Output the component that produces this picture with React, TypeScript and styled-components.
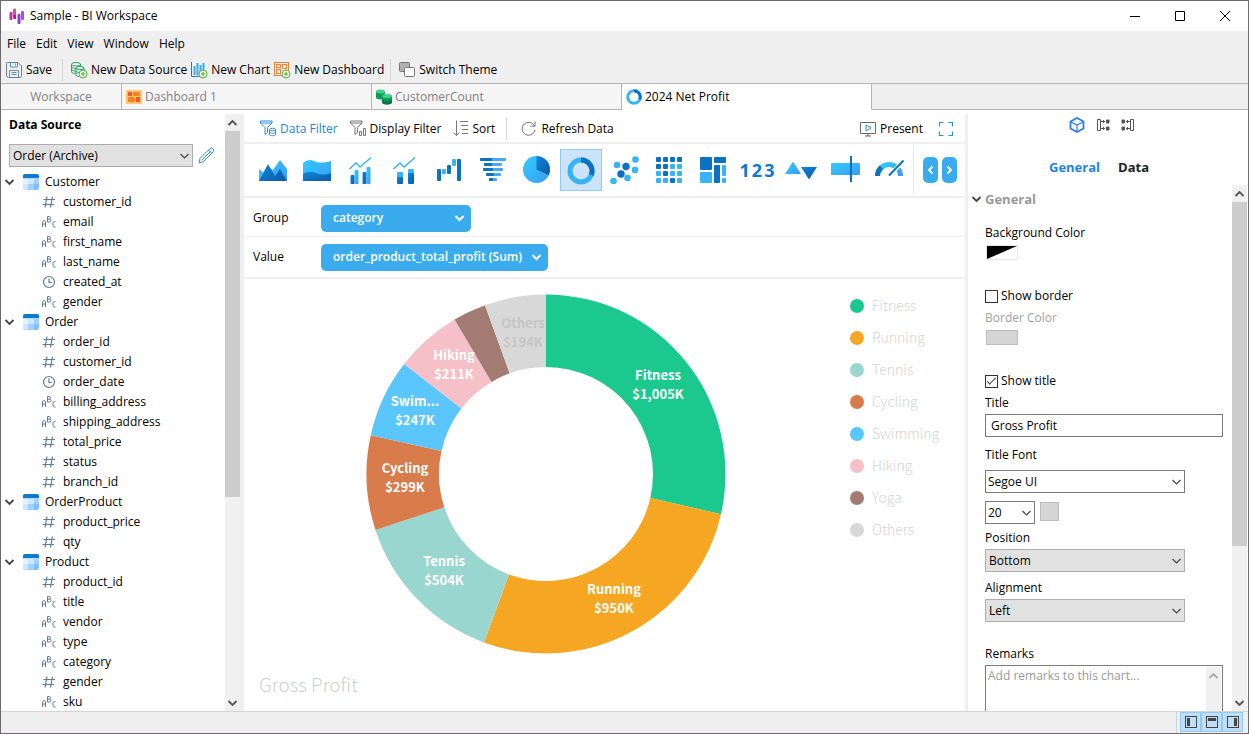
import React from "react";
import styled, { createGlobalStyle, css } from "styled-components";

const UI = `"Open Sans", "Noto Sans", sans-serif`;
const CHART = `"Noto Sans CJK SC", "Noto Sans", sans-serif`;

const Global = createGlobalStyle`
  *, *::before, *::after { box-sizing: border-box; }
  body { margin: 0; background: #fff; color: #000; font: 12px/16px ${UI}; }
  button, input, select, textarea { font: inherit; color: inherit; margin: 0; }
  h1, h2, h3, ul { margin: 0; padding: 0; font: inherit; list-style: none; }
  svg { display: block; flex: none; overflow: visible; }
`;

const Window = styled.div`
  height: 100vh;
  display: flex;
  flex-direction: column;
  border: 1px solid #6c6a6d;
  overflow: hidden;
`;

const TitleBar = styled.header`
  display: flex;
  align-items: center;
  height: 30px;
  padding: 0 1px 0 8px;
  gap: 5px;
  flex: none;
`;
const AppTitle = styled.h1`
  flex: 1;
`;
const WindowButton = styled.button`
  width: 45px;
  height: 30px;
  padding: 0;
  border: 0;
  background: none;
  display: grid;
  place-items: center;
`;
const WindowButtons = styled.div`
  display: flex;
`;

const TopBars = styled.div`
  background: #efefef;
  flex: none;
`;
const MenuBar = styled.nav`
  display: flex;
  align-items: center;
  height: 26px;
  padding-left: 6px;
  gap: 10px;
`;
const PlainButton = styled.button`
  padding: 0;
  border: 0;
  background: none;
  white-space: nowrap;
`;
const ToolBar = styled.div`
  display: flex;
  align-items: center;
  height: 26px;
  padding-left: 5px;
`;
const ToolButton = styled(PlainButton)<{ $color?: string; $gap?: number }>`
  display: flex;
  align-items: center;
  gap: ${(p) => p.$gap ?? 4}px;
  color: ${(p) => p.$color ?? "#000"};
`;
const ToolGroup = styled.div<{ $gap?: number }>`
  display: flex;
  align-items: center;
  gap: ${(p) => p.$gap ?? 4}px;
`;
const Divider = styled.span<{ $before?: number; $after?: number }>`
  width: 1px;
  height: 22px;
  background: #d4d4d4;
  margin: 0 ${(p) => p.$after ?? 8}px 0 ${(p) => p.$before ?? 10}px;
`;

const TabStrip = styled.div`
  display: flex;
  flex: none;
  height: 27px;
  border-top: 1px solid #b4b4b4;
  background: #efefef;
`;
const DocTab = styled.button<{ $active?: boolean; $center?: boolean }>`
  width: ${(p) => (p.$center ? 121 : 250)}px;
  flex: 0 1 auto;
  display: flex;
  align-items: center;
  justify-content: ${(p) => (p.$center ? "center" : "flex-start")};
  gap: 3px;
  padding: 0 4px;
  border: 0;
  border-right: 1px solid #b4b4b4;
  border-bottom: 1px solid ${(p) => (p.$active ? "#fff" : "#b4b4b4")};
  background: ${(p) => (p.$active ? "#fff" : "#f5f5f5")};
  color: ${(p) => (p.$active ? "#000" : "#808080")};
`;
const TabFill = styled.div`
  flex: 1;
  border-bottom: 1px solid #b4b4b4;
`;

const Body = styled.div`
  flex: 1;
  min-height: 0;
  display: flex;
  padding-top: 4px;
`;

/* Scroll bars */
const Track = styled.div`
  width: 15px;
  flex: none;
  display: flex;
  flex-direction: column;
  background: #f0f0f0;
`;
const ScrollButton = styled.button`
  width: 15px;
  height: 17px;
  flex: none;
  padding: 0;
  border: 0;
  background: none;
  display: grid;
  place-items: center;
`;
const ThumbArea = styled.div`
  flex: 1;
`;
const Thumb = styled.div<{ $share: number }>`
  height: ${(p) => p.$share}%;
  background: #cdcdcd;
`;

/* Data source panel */
const SourcePanel = styled.aside`
  display: flex;
  width: 243px;
  flex: none;
  border-right: 4px solid #efefef;
`;
const SourceContent = styled.div`
  flex: 1;
  min-width: 0;
  overflow: hidden;
`;
const PanelTitle = styled.h2`
  padding: 3px 8px 11px;
  font-weight: 700;
`;
const SourcePicker = styled.div`
  display: flex;
  align-items: center;
  gap: 5px;
  padding: 0 8px;
  margin-bottom: 5px;
`;
const Group = styled.button`
  display: flex;
  align-items: center;
  width: 100%;
  height: 20px;
  padding: 0 0 0 4px;
  border: 0;
  background: none;
`;
const GroupLabel = styled.span`
  margin-left: 6px;
`;
const TableGlyph = styled.span`
  margin-left: 9px;
`;
const Field = styled.li`
  display: flex;
  align-items: center;
  gap: 7px;
  height: 20px;
  padding-left: 41px;
`;

/* Select with its own arrow */
const SelectBox = styled.div<{ $width: number }>`
  position: relative;
  width: ${(p) => p.$width}px;
  svg {
    position: absolute;
    right: 4px;
    top: 9px;
    pointer-events: none;
  }
`;
const Select = styled.select<{ $light?: boolean }>`
  appearance: none;
  display: block;
  width: 100%;
  height: 23px;
  padding: 0 18px 0 ${(p) => (p.$light ? 2 : 3)}px;
  border: 1px solid ${(p) => (p.$light ? "#7a7a7a" : "#adadad")};
  border-radius: 0;
  background: ${(p) => (p.$light ? "#fff" : "#e1e1e1")};
`;

/* Main column */
const Main = styled.main`
  flex: 1;
  min-width: 0;
  display: flex;
  flex-direction: column;
`;
const ChartTools = styled.div`
  display: flex;
  align-items: center;
  height: 30px;
  flex: none;
  padding: 1px 12px 0 16px;
  border-bottom: 2px solid #efefef;
`;
const Spacer = styled.span`
  flex: 1;
`;
const TypeRow = styled.div`
  display: flex;
  align-items: center;
  height: 54px;
  flex: none;
  border-bottom: 2px solid #efefef;
`;
const TypeList = styled.div`
  display: flex;
  align-items: center;
  gap: 2px;
  flex: 1;
  padding-left: 8px;
`;
const TypeButton = styled.button<{ $on?: boolean }>`
  width: 42px;
  height: 42px;
  flex: none;
  padding: ${(p) => (p.$on ? "2px 0 0 0" : 0)};
  display: grid;
  place-items: center;
  border: 1px solid transparent;
  background: none;
  ${(p) =>
    p.$on &&
    css`
      background: #cce4f9;
      border-color: #94c9f0;
    `}
`;
const Pager = styled.div`
  display: flex;
  align-items: center;
  gap: 4px;
  height: 48px;
  padding: 0 8px 0 9px;
  border-left: 1px solid #e9e9e9;
`;
const PagerButton = styled.button`
  width: 15px;
  height: 26px;
  padding: 0;
  border: 0;
  border-radius: 5px;
  background: #3aaced;
  display: grid;
  place-items: center;
`;
const BindRow = styled.div<{ $last?: boolean }>`
  display: flex;
  align-items: center;
  height: ${(p) => (p.$last ? 42 : 39)}px;
  flex: none;
  padding: ${(p) => (p.$last ? 0 : 2)}px 0 0 9px;
  border-bottom: ${(p) => (p.$last ? "2px solid #efefef" : "1px solid #efefef")};
`;
const BindLabel = styled.span`
  width: 68px;
`;
const Pill = styled.button`
  display: flex;
  align-items: center;
  justify-content: space-between;
  gap: 10px;
  min-width: 150px;
  height: 27px;
  padding: 0 7px 0 12px;
  border: 0;
  border-radius: 5px;
  background: #3aaced;
  color: #fff;
  font-weight: 600;
`;
const ChartArea = styled.section`
  flex: 1;
  min-height: 0;
  display: flex;
  flex-direction: column;
  padding: 9px 0 13px;
  font-family: ${CHART};
`;
const ChartBody = styled.div`
  flex: 1;
  min-height: 0;
  display: flex;
`;
const DonutHolder = styled.div`
  flex: 1;
  display: flex;
  justify-content: center;
  padding: 6px 2px 0 0;
`;
const SliceText = styled.text`
  font: 700 13px ${CHART};
  text-anchor: middle;
`;
const Legend = styled.ul`
  width: 115px;
  flex: none;
  padding-top: 2px;
`;
const LegendItem = styled.li`
  display: flex;
  align-items: center;
  gap: 8px;
  height: 32px;
  font-size: 14px;
  font-weight: 300;
  line-height: 20px;
  color: #d4d4d4;
`;
const LegendLabel = styled.span`
  padding-bottom: 2px;
`;
const Dot = styled.span<{ $color: string }>`
  width: 14px;
  height: 14px;
  border-radius: 50%;
  background: ${(p) => p.$color};
`;
const ChartTitle = styled.h2`
  padding-left: 15px;
  font-size: 19px;
  font-weight: 300;
  line-height: 28px;
  color: #d0d0d0;
`;

/* Property panel */
const Props = styled.aside`
  width: 283px;
  flex: none;
  display: flex;
  flex-direction: column;
  border-left: 3px solid #efefef;
`;
const ModeRow = styled.div`
  display: flex;
  align-items: center;
  justify-content: center;
  gap: 11px;
  height: 22px;
  padding-right: 12px;
`;
const PropTabs = styled.div`
  display: flex;
  justify-content: center;
  gap: 18px;
  padding: 21px 18px 8px 0;
`;
const PropTab = styled(PlainButton)<{ $on?: boolean }>`
  font-size: 13px;
  line-height: 20px;
  font-weight: 700;
  color: ${(p) => (p.$on ? "#1a86e0" : "#222")};
`;
const PropScroll = styled.div`
  flex: 1;
  min-height: 0;
  display: flex;
  padding-right: 1px;
`;
const PropContent = styled.div`
  flex: 1;
  min-width: 0;
  overflow: hidden;
  padding-right: 9px;
`;
const Section = styled.button`
  display: flex;
  align-items: center;
  gap: 4px;
  height: 28px;
  padding: 0 0 0 4px;
  border: 0;
  background: none;
  color: #999;
  font-size: 13px;
  font-weight: 700;
`;
const Form = styled.form`
  padding: 12px 0 0 17px;
  display: flex;
  flex-direction: column;
  align-items: flex-start;
`;
const FieldBlock = styled.div<{ $after?: number; $gap?: number }>`
  display: flex;
  flex-direction: column;
  align-items: flex-start;
  gap: ${(p) => p.$gap ?? 3}px;
  width: 100%;
  margin-bottom: ${(p) => p.$after ?? 8}px;
`;
const Label = styled.label<{ $dim?: boolean }>`
  color: ${(p) => (p.$dim ? "#a0a0a0" : "#000")};
`;
const CheckLabel = styled.label`
  display: flex;
  align-items: center;
  gap: 3px;
  margin-bottom: 6px;
`;
const Check = styled.input`
  appearance: none;
  width: 13px;
  height: 13px;
  border: 1px solid #333;
  background: #fff;
  display: grid;
  place-items: center;
  &:checked::before {
    content: "";
    width: 9px;
    height: 4px;
    margin-top: -3px;
    border: solid #333;
    border-width: 0 0 1px 1px;
    transform: rotate(-45deg);
  }
`;
const Swatch = styled.button<{ $square?: boolean }>`
  width: ${(p) => (p.$square ? 19 : 32)}px;
  height: ${(p) => (p.$square ? 19 : 15)}px;
  margin: ${(p) => (p.$square ? "1px 0 0 0" : "0 0 0 1px")};
  padding: 0;
  border: 1px solid #bdbdbd;
  background: #d5d5d5;
`;
const SplitSwatch = styled(Swatch)`
  border-color: #e6e6e6;
  background: #fff;
`;
const TextInput = styled.input`
  width: 100%;
  height: 23px;
  padding: 0 5px;
  border: 1px solid #7a7a7a;
`;
const FontRow = styled.div`
  display: flex;
  gap: 5px;
  margin-bottom: 6px;
`;
const RemarkBox = styled.div`
  width: 100%;
  height: 80px;
  display: flex;
  border: 1px solid #7a7a7a;
  padding: 1px 1px 0 0;
`;
const RemarkInput = styled.textarea`
  flex: 1;
  min-width: 0;
  padding: 1px 2px;
  border: 0;
  outline: 0;
  resize: none;
  overflow: hidden;
  &::placeholder { color: #999; opacity: 1; }
`;

const StatusBar = styled.footer`
  display: flex;
  justify-content: flex-end;
  height: 22px;
  flex: none;
  padding-right: 5px;
  background: #efefef;
  border-top: 1px solid #d4d4d4;
`;
const PaneGroup = styled.div`
  display: flex;
  padding-left: 3px;
  border-left: 1px solid #d4d4d4;
`;
const PaneButton = styled.button`
  width: 21px;
  height: 20px;
  padding: 0;
  display: grid;
  place-items: center;
  border: 1px solid #94c9f0;
  background: #bfdff8;
`;

/* ---------- drawings ---------- */

const Chevron = ({ color = "#444", up = false, width = 1.3 }: { color?: string; up?: boolean; width?: number }) => (
  <svg width="9" height="6" viewBox="0 0 9 6" fill="none" stroke={color} strokeWidth={width}>
    <path d={up ? "M.5 5l4-4 4 4" : "M.5 1l4 4 4-4"} />
  </svg>
);

const Plus = () => (
  <g>
    <circle cx="12" cy="12" r="4" fill="#f4fbef" stroke="#56b13a" />
    <path d="M9.8 12h4.4M12 9.800v4.400" stroke="#56b13a" strokeWidth="1.200" />
  </g>
);

const Logo = () => (
  <svg width="16" height="16" viewBox="0 0 16 16">
    <rect x="0.500" y="4" width="3" height="8" rx="1" fill="#c0309c" />
    <rect x="4" y="0.500" width="3" height="9" rx="1" fill="#d84bb4" />
    <rect x="4.500" y="7" width="2.500" height="4" fill="#a61e86" />
    <rect x="8.500" y="6" width="3" height="10" rx="1" fill="#8c3bd8" />
    <rect x="12" y="3" width="3" height="9" rx="1" fill="#a057e6" />
  </svg>
);

const SaveIcon = () => (
  <svg width="16" height="16" viewBox="0 0 16 16" fill="none" stroke="#6f7f8a">
    <path d="M1.500.5h10.500l3.500 3.500v9.500a2 2 0 0 1-2 2h-11a2 2 0 0 1-2-2v-12a1 1 0 0 1 1-1z" />
    <path d="M4.500.5v4.500h7v-4.500M9.500 1.500v2" stroke="#3a9be0" />
    <path d="M3.500 15v-6.500h9v6.500" stroke="#8a8a8a" />
    <path d="M5.500 10.500h5M5.500 12.500h5" stroke="#3a9be0" />
  </svg>
);
const NewSourceIcon = () => (
  <svg width="16" height="16" viewBox="0 0 16 16" fill="none" stroke="#2aa463">
    <ellipse cx="5" cy="2.300" rx="4.500" ry="1.800" />
    <path d="M.5 2.300v7.500c0 1 2 1.800 4.500 1.800M9.500 2.300v2M.5 4.800c0 1 2 1.800 4.500 1.800M.5 7.300c0 1 2 1.800 4.500 1.800" />
    <ellipse cx="9" cy="6" rx="4" ry="1.500" fill="#efefef" />
    <path d="M5 6v7c0 1 1.500 1.500 3.500 1.500M13 6v2M5 9c0 .8 1 1.300 3 1.400" />
    <Plus />
  </svg>
);
const NewChartIcon = () => (
  <svg width="16" height="16" viewBox="0 0 16 16" fill="none" stroke="#35aef0">
    <path d="M.5 0v14.500h8" stroke="#2176b8" />
    <path d="M3.500 4v9M6.500 1v12M9.500 3v8M12.500 1v8" strokeWidth="2" />
    <Plus />
  </svg>
);
const NewDashIcon = () => (
  <svg width="16" height="16" viewBox="0 0 16 16" fill="none" stroke="#e5823f">
    <rect x=".5" y=".5" width="14" height="13" />
    <rect x="2.500" y="2.500" width="4" height="3" />
    <rect x="8.500" y="2.500" width="4" height="4" />
    <rect x="2.500" y="7.500" width="4" height="4" />
    <Plus />
  </svg>
);
const ThemeIcon = () => (
  <svg width="16" height="16" viewBox="0 0 16 16" stroke="#777">
    <rect x=".5" y=".5" width="10" height="9" rx="1" fill="#b0b0b0" />
    <rect x="5.500" y="5.500" width="10" height="9" rx="1" fill="#fff" />
  </svg>
);
const DashTabIcon = () => (
  <svg width="16" height="16" viewBox="0 0 16 16">
    <rect y="1" width="16" height="14" rx="1" fill="#fcc56f" />
    <rect x="2" y="3" width="4" height="4" fill="#f05a28" />
    <rect x="7" y="3" width="7" height="4" rx="1" fill="#f5822a" />
    <rect x="2" y="8" width="7" height="5" rx="1" fill="#f5822a" />
    <rect x="10" y="8" width="4" height="5" fill="#f05a28" />
  </svg>
);
const DbTabIcon = () => (
  <svg width="16" height="16" viewBox="0 0 16 16">
    <path d="M0 2.500v6c0 1.300 2 2 4.500 2s4.500-.7 4.500-2v-6z" fill="#0b9a58" />
    <ellipse cx="4.500" cy="2.500" rx="4.500" ry="2" fill="#3fd08c" />
    <path d="M6 7v6.500c0 1.300 2.200 2.200 5 2.200s5-.9 5-2.200v-6.500z" fill="#067a43" />
    <path d="M6 7v3c0 1.300 2.200 2 5 2s5-.7 5-2v-3z" fill="#0a9d58" />
    <ellipse cx="11" cy="7" rx="5" ry="2" fill="#3fd08c" />
  </svg>
);
const RingIcon = ({ size = 16 }: { size?: number }) => (
  <svg width={size} height={size} viewBox="0 0 28 28" fill="none" strokeWidth="5">
    <circle cx="14" cy="14" r="11" stroke="#36b3f5" />
    <path d="M14 3a11 11 0 0 1 10.300 15" stroke="#0b72c2" />
  </svg>
);
const Pencil = () => (
  <svg width="17" height="17" viewBox="0 0 17 17" fill="none" stroke="#2b8fd8">
    <path d="M1 16l1-4.500 10-10q1.500-1.200 3 .3t.2 3l-10 10zM10.500 3l3.300 3.300M3.500 13.500l9-9" />
  </svg>
);
const TableIcon = () => (
  <svg width="16" height="16" viewBox="0 0 16 16">
    <rect width="16" height="16" rx="2" fill="#b5dbff" />
    <path d="M0 5h5v5h-5z" fill="#e4f2ff" />
    <path d="M5 5h6v5h-6zM0 10h5v5h-5z" fill="#cfe7ff" />
    <path d="M11 10h5v4l-2 2h-3z" fill="#7fbfff" />
    <path d="M5 10h6v6h-6zM11 5h5v5h-5z" fill="#a3d1ff" />
    <path d="M0 4v-2a2 2 0 0 1 2-2h12a2 2 0 0 1 2 2v2z" fill="#0a7ad2" />
  </svg>
);
const TypeGlyph = ({ kind }: { kind: string }) => (
  <svg width="14" height="14" viewBox="0 0 14 14" fill="none" stroke="#587ba5" strokeWidth="1">
    {kind === "#" && <path d="M5 1.500l-2 11M10.500 1.500l-2 11M1.500 4.500h11.500M.5 9.500h11.500" strokeWidth="1.200" />}
    {kind === "t" && (
      <>
        <circle cx="7" cy="7" r="5.500" strokeWidth="1.200" />
        <path d="M7 3.500v4h3" strokeWidth="1.200" />
      </>
    )}
    {kind === "a" && (
      <>
        <path d="M.5 12v-5.500q1.500-2 3 0v5.500M.5 9h3" />
        <path d="M5.500 1.500v5.500h2q1.500-.2 1.500-1.400t-1.500-1.400h-2M5.500 1.500h2q1 .2 1 1.300t-1 1.300" />
        <path d="M13.500 6.500h-1q-1.500.2-1.500 1.500v2.500q0 1.300 1.500 1.500h1" />
      </>
    )}
  </svg>
);
const Funnel = ({ color, bars }: { color: string; bars?: boolean }) => (
  <svg width="17" height="17" viewBox="0 0 17 17" fill="none" stroke={color}>
    <path d="M.5 1v2l4.500 4.500v7l2.500-2v-5l4.500-4.500v-2zM.5 3h11.500" />
    {bars ? (
      <path d="M9.500 15.500v-4h2v4zM13.500 15.500v-7h2v7z" />
    ) : (
      <>
        <ellipse cx="12.500" cy="9.500" rx="3" ry="1.200" />
        <path d="M9.500 9.500v5c0 .8 1.300 1.200 3 1.200s3-.4 3-1.200v-5M9.500 12c0 .8 1.300 1.200 3 1.200s3-.4 3-1.200" />
      </>
    )}
  </svg>
);
const SortIcon = () => (
  <svg width="15" height="17" viewBox="0 0 15 17" fill="none" stroke="#777">
    <path d="M3.500.5v15M.5 12.500l3 3 3-3M7 1.500h8M8 5.500h7M9 9.500h6M9 13.500h6" />
  </svg>
);
const RefreshIcon = () => (
  <svg width="15" height="15" viewBox="0 0 15 15" fill="none" stroke="#777">
    <path d="M13.500 5a6.500 6.500 0 1 0 .5 4M14 .5v4.700h-4.700" />
  </svg>
);
const PresentIcon = () => (
  <svg width="16" height="16" viewBox="0 0 16 16" fill="none" stroke="#666">
    <path d="M.5 1.500h15v11h-15zM8 12.500v2.500M5 15h6" />
    <path d="M6 4v6l5-3z" stroke="#2b8fd8" />
  </svg>
);
const ExpandIcon = () => (
  <svg width="14" height="14" viewBox="0 0 14 14" fill="none" stroke="#2b8fd8" strokeWidth="1.200">
    <path d="M.5 4.500v-4h4M9.500.5h4v4M13.500 9.500v4h-4M4.500 13.500h-4v-4" />
  </svg>
);

const LIGHT = "#36b3f9";
const DARK = "#0b72c2";

const GradientDefs = styled.svg`
  position: absolute;
`;
const Gradients = () => (
  <GradientDefs width="0" height="0" aria-hidden="true">
    <defs>
      <linearGradient id="lt" x1="0" y1="0" x2="1" y2="1">
        <stop offset="0" stopColor="#33ccff" />
        <stop offset="1" stopColor="#3a9bf0" />
      </linearGradient>
      <linearGradient id="dk" x1="0" y1="0" x2="1" y2="1">
        <stop offset="0" stopColor="#0f86dc" />
        <stop offset="1" stopColor="#0a5ba6" />
      </linearGradient>
    </defs>
  </GradientDefs>
);

const trend = <path d="M2.500 12l6.500-6 4 4 11-9.500" fill="none" stroke={LIGHT} strokeWidth="1.500" />;

/* One string per row of the heat map icon; d is a dark cell, l a light one. */
const heatRows = ["dddd", "ddll", "ldll", "lldl"];

const chartTypes: { name: string; art: React.ReactNode }[] = [
  {
    name: "Area",
    art: (
      <>
        <path d="M0 24v-12l5 4 5-5 4 2 7-10 7 9v12z" fill="url(#lt)" />
        <path d="M0 24l9-17 7 12 5-7 7 12z" fill="url(#dk)" />
      </>
    ),
  },
  {
    name: "Stacked area",
    art: (
      <>
        <path d="M0 24v-18q5-5 11-2t17 0v20z" fill="url(#lt)" />
        <path d="M0 24v-7q6-4 13-1t15 0v8z" fill="url(#dk)" />
      </>
    ),
  },
  {
    name: "Bar and line",
    art: (
      <>
        {trend}
        <rect x="3.500" y="18" width="4" height="9" rx="1" fill="url(#dk)" />
        <rect x="7.500" y="13" width="4" height="14" rx="1" fill="url(#lt)" />
        <rect x="15.500" y="15" width="4" height="12" rx="1" fill="url(#dk)" />
        <rect x="19.500" y="10" width="4" height="17" rx="1" fill="url(#lt)" />
      </>
    ),
  },
  {
    name: "Stacked bar and line",
    art: (
      <>
        {trend}
        <rect x="6" y="15" width="6" height="7" rx="1" fill={LIGHT} />
        <rect x="6" y="20" width="6" height="7" rx="1" fill="url(#dk)" />
        <rect x="17" y="12" width="6" height="7" rx="1" fill={LIGHT} />
        <rect x="17" y="16" width="6" height="11" rx="1" fill="url(#dk)" />
      </>
    ),
  },
  {
    name: "Waterfall",
    art: (
      <>
        <rect x="2" y="12" width="4" height="12" rx="1" fill={DARK} />
        <rect x="7" y="12" width="4" height="5" rx="1" fill={LIGHT} />
        <rect x="12" y="8" width="4" height="9" rx="1" fill={DARK} />
        <rect x="17" y="2" width="4" height="7" rx="1" fill={LIGHT} />
        <rect x="22" y="2" width="4" height="22" rx="1" fill={DARK} />
      </>
    ),
  },
  {
    name: "Funnel",
    art: (
      <>
        {[[1, 26, 12], [5, 18, 8], [4, 20, 10], [7, 15, 8], [10, 8, 4]].map(([x, w, d], i) => (
          <React.Fragment key={i}>
            <rect x={x} y={1 + i * 5} width={w} height="3" rx="1" fill="#46a8f0" />
            <rect x={x} y={1 + i * 5} width={d} height="3" rx="1" fill={DARK} />
          </React.Fragment>
        ))}
      </>
    ),
  },
  {
    name: "Pie",
    art: (
      <>
        <circle cx="13.500" cy="12.500" r="13.500" fill="url(#lt)" />
        <path d="M13.500 12.500v-13.500a13.500 13.500 0 0 1 12.200 19.200z" fill="url(#dk)" />
      </>
    ),
  },
  { name: "Donut", art: null },
  {
    name: "Scatter",
    art: (
      <>
        {[[6, 8], [24.5, 2.5], [24, 13], [16.5, 21], [2.5, 24]].map(([x, y]) => (
          <circle key={x} cx={x} cy={y} r="3.300" fill={LIGHT} />
        ))}
        <circle cx="15" cy="9.500" r="3.700" fill={DARK} />
        <circle cx="10" cy="17" r="3.700" fill={DARK} />
      </>
    ),
  },
  {
    name: "Heat map",
    art: (
      <>
        {heatRows.map((row, r) =>
          [...row].map((cell, c) => (
            <rect key={`${r}${c}`} x={1 + c * 7} y={r * 7} width="5" height="5" rx="1" fill={cell === "d" ? DARK : LIGHT} />
          ))
        )}
      </>
    ),
  },
  {
    name: "Tree map",
    art: (
      <>
        <rect x="1" y="0" width="12" height="13" rx="1" fill={DARK} />
        <rect x="1" y="15" width="12" height="11" rx="1" fill={LIGHT} />
        <rect x="15" y="0" width="12" height="6" rx="1" fill={DARK} />
        <rect x="15" y="8" width="6" height="18" rx="1" fill={DARK} />
        <rect x="23" y="8" width="4" height="11" rx="1" fill={LIGHT} />
        <rect x="23" y="21" width="4" height="5" rx="1" fill={LIGHT} />
      </>
    ),
  },
  { name: "Value", art: null },
  {
    name: "Trend",
    art: (
      <>
        <path d="M-2 17l8-12.500 8 12.500z" fill="url(#lt)" />
        <path d="M14 10h16l-8 12.500z" fill="url(#dk)" />
      </>
    ),
  },
  {
    name: "Bullet",
    art: (
      <>
        <rect x="0" y="6" width="29" height="12" rx="1" fill="url(#lt)" />
        <rect x="19" y="-1" width="2" height="26" fill={DARK} />
      </>
    ),
  },
  {
    name: "Gauge",
    art: (
      <>
        <path d="M2.500 19a11.500 11.500 0 0 1 23 0" fill="none" stroke="url(#lt)" strokeWidth="5" />
        <path d="M2.500 19a11.500 11.500 0 0 1 4-8.700" fill="none" stroke={DARK} strokeWidth="5" />
        <path d="M14 19l15-15.500" stroke="#fff" strokeWidth="4" />
        <path d="M14 18.500l14.500-15" stroke={DARK} strokeWidth="2" />
      </>
    ),
  },
];
const Digits = styled.span`
  display: flex;
  gap: 2px;
  font: 700 18px/24px "Noto Sans", sans-serif;
  color: #0c7ace;
`;

/* ---------- data ---------- */

const tables: [string, [string, string][]][] = [
  ["Customer", [["#", "customer_id"], ["a", "email"], ["a", "first_name"], ["a", "last_name"], ["t", "created_at"], ["a", "gender"]]],
  [
    "Order",
    [["#", "order_id"], ["#", "customer_id"], ["t", "order_date"], ["a", "billing_address"], ["a", "shipping_address"], ["#", "total_price"], ["#", "status"], ["#", "branch_id"]],
  ],
  ["OrderProduct", [["#", "product_price"], ["#", "qty"]]],
  ["Product", [["#", "product_id"], ["a", "title"], ["a", "vendor"], ["a", "type"], ["a", "category"], ["#", "gender"], ["a", "sku"]]],
];

type Slice = { name: string; value: number; color: string; label?: string; at?: [number, number] };
const slices: Slice[] = [
  { name: "Fitness", value: 1005, color: "#1bc98e", label: "$1,005K", at: [292, 86] },
  { name: "Running", value: 950, color: "#f5a623", label: "$950K", at: [248, 300] },
  { name: "Tennis", value: 504, color: "#99d6d0", label: "$504K", at: [78, 272] },
  { name: "Cycling", value: 299, color: "#d97c4b", label: "$299K", at: [39, 179] },
  { name: "Swimming", value: 247, color: "#5bc6fb", label: "$247K", at: [49, 112] },
  { name: "Hiking", value: 211, color: "#f5c0c7", label: "$211K", at: [88, 66] },
  { name: "Yoga", value: 105, color: "#a37b72" },
  { name: "Others", value: 194, color: "#d8d8d8", label: "$194K", at: [157, 34] },
];

const total = slices.reduce((sum, s) => sum + s.value, 0);
const point = (r: number, share: number) => {
  const a = share * Math.PI * 2;
  return `${(180 + r * Math.sin(a)).toFixed(2)} ${(180 - r * Math.cos(a)).toFixed(2)}`;
};

const Donut = () => {
  let run = 0;
  return (
    <svg width="360" height="360" viewBox="0 0 360 360" role="img" aria-label="Net profit by category">
      {slices.map((s) => {
        const a = run / total;
        run += s.value;
        const b = run / total;
        return (
          <path
            key={s.name}
            fill={s.color}
            d={`M${point(179.5, a)}A179.500 179.500 0 0 1 ${point(179.5, b)}L${point(107, b)}A107 107 0 0 0 ${point(107, a)}Z`}
          />
        );
      })}
      {slices.map(
        (s) =>
          s.at && (
            <SliceText key={s.name} x={s.at[0]} y={s.at[1]} fill={s.name === "Others" ? "#c6c6c6" : "#fff"}>
              <tspan>{s.name === "Swimming" ? "Swim..." : s.name}</tspan>
              <tspan x={s.at[0]} dy="19">
                {s.label}
              </tspan>
            </SliceText>
          )
      )}
    </svg>
  );
};

const ScrollBar = ({ share }: { share: number }) => (
  <Track>
    <ScrollButton aria-label="Scroll up">
      <Chevron up width={1.8} color="#555" />
    </ScrollButton>
    <ThumbArea>
      <Thumb $share={share} />
    </ThumbArea>
    <ScrollButton aria-label="Scroll down">
      <Chevron width={1.8} color="#555" />
    </ScrollButton>
  </Track>
);

const Picker = ({ id, label, value, width, light }: { id: string; label?: string; value: string; width: number; light?: boolean }) => (
  <SelectBox $width={width}>
    <Select id={id} aria-label={label} $light={light} defaultValue={value}>
      <option>{value}</option>
    </Select>
    <Chevron width={1.2} />
  </SelectBox>
);

const Pane = ({ part, name }: { part: string; name: string }) => (
  <PaneButton aria-label={name}>
    <svg width="12" height="12" viewBox="0 0 12 12">
      <rect x=".5" y=".5" width="11" height="11" fill="none" stroke="#444" />
      <path d={part} fill="#444" />
    </svg>
  </PaneButton>
);

export default function App() {
  return (
    <Window>
      <Global />
      <Gradients />
      <TitleBar>
        <Logo />
        <AppTitle>Sample - BI Workspace</AppTitle>
        <WindowButtons>
          <WindowButton aria-label="Minimize">
            <svg width="10" height="10" viewBox="0 0 10 10"><path d="M0 5.500h10" stroke="#000" /></svg>
          </WindowButton>
          <WindowButton aria-label="Maximize">
            <svg width="10" height="10" viewBox="0 0 10 10"><path d="M.5.5h9v9h-9z" fill="none" stroke="#000" /></svg>
          </WindowButton>
          <WindowButton aria-label="Close">
            <svg width="10" height="10" viewBox="0 0 10 10"><path d="M0 0l10 10M10 0l-10 10" stroke="#000" /></svg>
          </WindowButton>
        </WindowButtons>
      </TitleBar>

      <TopBars>
        <MenuBar>
          {["File", "Edit", "View", "Window", "Help"].map((m) => (
            <PlainButton key={m}>{m}</PlainButton>
          ))}
        </MenuBar>
        <ToolBar>
          <ToolButton><SaveIcon />Save</ToolButton>
          <Divider />
          <ToolGroup>
            <ToolButton><NewSourceIcon />New Data Source</ToolButton>
            <ToolButton><NewChartIcon />New Chart</ToolButton>
            <ToolButton><NewDashIcon />New Dashboard</ToolButton>
          </ToolGroup>
          <Divider $before={6} />
          <ToolButton><ThemeIcon />Switch Theme</ToolButton>
        </ToolBar>
      </TopBars>

      <TabStrip>
        <DocTab $center>Workspace</DocTab>
        <DocTab><DashTabIcon />Dashboard 1</DocTab>
        <DocTab><DbTabIcon />CustomerCount</DocTab>
        <DocTab $active><RingIcon />2024 Net Profit</DocTab>
        <TabFill />
      </TabStrip>

      <Body>
        <SourcePanel>
          <SourceContent>
            <PanelTitle>Data Source</PanelTitle>
            <SourcePicker>
              <Picker id="source" label="Data source" value="Order (Archive)" width={184} />
              <PlainButton aria-label="Edit data source"><Pencil /></PlainButton>
            </SourcePicker>
            {tables.map(([name, fields]) => (
              <React.Fragment key={name}>
                <Group>
                  <Chevron width={1.8} />
                  <TableGlyph><TableIcon /></TableGlyph>
                  <GroupLabel>{name}</GroupLabel>
                </Group>
                <ul>
                  {fields.map(([kind, field]) => (
                    <Field key={field}><TypeGlyph kind={kind} />{field}</Field>
                  ))}
                </ul>
              </React.Fragment>
            ))}
          </SourceContent>
          <ScrollBar share={65} />
        </SourcePanel>

        <Main>
          <ChartTools>
            <ToolGroup $gap={12}>
              <ToolButton $color="#1a86e0" $gap={3}><Funnel color="#2b8fd8" />Data Filter</ToolButton>
              <ToolButton $gap={3}><Funnel color="#777" bars />Display Filter</ToolButton>
              <ToolButton><SortIcon />Sort</ToolButton>
            </ToolGroup>
            <Divider $before={11} $after={14} />
            <ToolButton $gap={5}><RefreshIcon />Refresh Data</ToolButton>
            <Spacer />
            <ToolGroup $gap={16}>
              <ToolButton><PresentIcon />Present</ToolButton>
              <PlainButton aria-label="Full screen"><ExpandIcon /></PlainButton>
            </ToolGroup>
          </ChartTools>
          <TypeRow>
            <TypeList>
              {chartTypes.map((t) => (
                <TypeButton key={t.name} aria-label={t.name} $on={t.name === "Donut"}>
                  {t.name === "Donut" ? (
                    <RingIcon size={28} />
                  ) : t.name === "Value" ? (
                    <Digits><span>1</span><span>2</span><span>3</span></Digits>
                  ) : (
                    <svg width="28" height="26" viewBox="0 0 28 26">{t.art}</svg>
                  )}
                </TypeButton>
              ))}
            </TypeList>
            <Pager>
              <PagerButton aria-label="Previous types">
                <svg width="5" height="8" viewBox="0 0 5 8"><path d="M4.500.5l-3.500 3.500 3.500 3.500" fill="none" stroke="#fff" strokeWidth="1.800" /></svg>
              </PagerButton>
              <PagerButton aria-label="Next types">
                <svg width="5" height="8" viewBox="0 0 5 8"><path d="M.5.5l3.500 3.500-3.500 3.500" fill="none" stroke="#fff" strokeWidth="1.800" /></svg>
              </PagerButton>
            </Pager>
          </TypeRow>
          <BindRow>
            <BindLabel>Group</BindLabel>
            <Pill>category<Chevron color="#fff" width={2} /></Pill>
          </BindRow>
          <BindRow $last>
            <BindLabel>Value</BindLabel>
            <Pill>order_product_total_profit (Sum)<Chevron color="#fff" width={2} /></Pill>
          </BindRow>
          <ChartArea>
            <ChartBody>
              <DonutHolder><Donut /></DonutHolder>
              <Legend>
                {slices.map((s) => (
                  <LegendItem key={s.name}>
                    <Dot $color={s.color} />
                    <LegendLabel>{s.name}</LegendLabel>
                  </LegendItem>
                ))}
              </Legend>
            </ChartBody>
            <ChartTitle>Gross Profit</ChartTitle>
          </ChartArea>
        </Main>

        <Props>
          <ModeRow>
            <PlainButton aria-label="Properties">
              <svg width="16" height="16" viewBox="0 0 16 16" fill="none" stroke="#2b7fe0" strokeWidth="1.800">
                <path d="M8 1l6.500 3.500v7l-6.500 3.500-6.500-3.500v-7z" />
                <path d="M2 5l6 3 6-3M8 8v7" strokeWidth="1.200" />
              </svg>
            </PlainButton>
            <PlainButton aria-label="Expand left">
              <svg width="14" height="14" viewBox="0 0 14 14" fill="none" stroke="#555">
                <path d="M1.500 1.500h3v11h-3zM5 3.500h4M7.500 2v3M5 10.500h4M7.500 9v3" />
                <path d="M10.500 2h2.500v3h-2.500zM10.500 9h2.500v3h-2.500z" fill="#555" />
              </svg>
            </PlainButton>
            <PlainButton aria-label="Expand right">
              <svg width="14" height="14" viewBox="0 0 14 14" fill="none" stroke="#555">
                <path d="M9.500 1.500h3v11h-3zM5 3.500h4M6.500 2v3M5 10.500h4M6.500 9v3" />
                <path d="M1 2h2.500v3h-2.500zM1 9h2.500v3h-2.500z" fill="#555" />
              </svg>
            </PlainButton>
          </ModeRow>
          <PropTabs>
            <PropTab $on>General</PropTab>
            <PropTab>Data</PropTab>
          </PropTabs>
          <PropScroll>
            <PropContent>
              <Section><Chevron width={1.8} />General</Section>
              <Form>
                <FieldBlock $gap={4} $after={28}>
                  <Label htmlFor="bg">Background Color</Label>
                  <SplitSwatch id="bg" type="button">
                    <svg width="30" height="13" viewBox="0 0 30 13"><path d="M0 0h30l-30 13z" /></svg>
                  </SplitSwatch>
                </FieldBlock>
                <CheckLabel><Check type="checkbox" />Show border</CheckLabel>
                <FieldBlock $gap={4} $after={28}>
                  <Label $dim htmlFor="bc">Border Color</Label>
                  <Swatch id="bc" type="button" />
                </FieldBlock>
                <CheckLabel><Check type="checkbox" defaultChecked />Show title</CheckLabel>
                <FieldBlock $after={10}>
                  <Label htmlFor="title">Title</Label>
                  <TextInput id="title" defaultValue="Gross Profit" />
                </FieldBlock>
                <FieldBlock $gap={7}>
                  <Label htmlFor="font">Title Font</Label>
                  <Picker id="font" value="Segoe UI" width={200} light />
                </FieldBlock>
                <FontRow>
                  <Picker id="size" label="Title size" value="20" width={50} light />
                  <Swatch $square type="button" aria-label="Title color" />
                </FontRow>
                <FieldBlock>
                  <Label htmlFor="pos">Position</Label>
                  <Picker id="pos" value="Bottom" width={200} />
                </FieldBlock>
                <FieldBlock $after={24}>
                  <Label htmlFor="align">Alignment</Label>
                  <Picker id="align" value="Left" width={200} />
                </FieldBlock>
                <FieldBlock>
                  <Label htmlFor="remarks">Remarks</Label>
                  <RemarkBox>
                    <RemarkInput id="remarks" placeholder="Add remarks to this chart..." />
                    <Track>
                      <ScrollButton type="button" aria-label="Scroll remarks up"><Chevron up color="#aaa" width={1.8} /></ScrollButton>
                    </Track>
                  </RemarkBox>
                </FieldBlock>
              </Form>
            </PropContent>
            <ScrollBar share={70} />
          </PropScroll>
        </Props>
      </Body>

      <StatusBar>
        <PaneGroup>
          <Pane name="Left pane" part="M2 2h3v8h-3z" />
          <Pane name="Top pane" part="M2 2h8v3h-8z" />
          <Pane name="Right pane" part="M7 2h3v8h-3z" />
        </PaneGroup>
      </StatusBar>
    </Window>
  );
}
